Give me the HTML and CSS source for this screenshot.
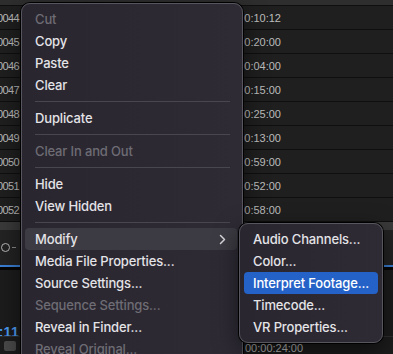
FILE: index.html
```html
<!doctype html>
<html lang="en">
<head>
  <meta charset="utf-8" />
  <meta name="viewport" content="width=device-width,initial-scale=1" />
  <title>Project panel context menu</title>
  <link rel="stylesheet" href="styles.css">
</head>
<body>

  <div class="screen">
    <div class="topbar"></div>

    <div class="rows">
      <div class="row"><span class="id">00044</span><span class="dur">00:00:10:12</span></div>
      <div class="row"><span class="id">00045</span><span class="dur">00:00:20:00</span></div>
      <div class="row"><span class="id">00046</span><span class="dur">00:00:04:00</span></div>
      <div class="row"><span class="id">00047</span><span class="dur">00:00:15:00</span></div>
      <div class="row"><span class="id">00048</span><span class="dur">00:00:25:00</span></div>
      <div class="row"><span class="id">00049</span><span class="dur">00:00:13:00</span></div>
      <div class="row"><span class="id">00050</span><span class="dur">00:00:59:00</span></div>
      <div class="row"><span class="id">00051</span><span class="dur">00:00:52:00</span></div>
      <div class="row"><span class="id">00052</span><span class="dur">00:00:58:00</span></div>
    </div>

    <div class="scrollbar"></div>

    <div class="controls">
      <span class="knob"></span><span class="dash"></span>
    </div>

    <div class="playhead"></div>

    <div class="timeline">
      <div class="tc-row"><span class="tc">00:00:11</span></div>
      <div class="tc-foot">
        <span class="mini-btn"></span>
        <span class="foot-tc">00:00:24:00</span>
      </div>
    </div>
  </div>

  <!-- main context menu -->
  <div class="menu main-menu">
    <div class="item disabled">Cut</div>
    <div class="item">Copy</div>
    <div class="item">Paste</div>
    <div class="item">Clear</div>
    <div class="sep"></div>
    <div class="item">Duplicate</div>
    <div class="sep"></div>
    <div class="item disabled">Clear In and Out</div>
    <div class="sep"></div>
    <div class="item">Hide</div>
    <div class="item">View Hidden</div>
    <div class="sep"></div>
    <div class="item open">Modify
      <svg class="chev" width="7" height="11" viewBox="0 0 7 11"><polyline points="1.5,1.5 5.5,5.5 1.5,9.5" fill="none" stroke="#d8d7dc" stroke-width="1.5" stroke-linecap="round" stroke-linejoin="round"/></svg>
    </div>
    <div class="item">Media File Properties...</div>
    <div class="item">Source Settings...</div>
    <div class="item disabled">Sequence Settings...</div>
    <div class="item">Reveal in Finder...</div>
    <div class="item disabled">Reveal Original...</div>
  </div>

  <!-- Modify submenu -->
  <div class="menu sub-menu">
    <div class="item">Audio Channels...</div>
    <div class="item">Color...</div>
    <div class="item active">Interpret Footage...</div>
    <div class="item">Timecode...</div>
    <div class="item">VR Properties...</div>
  </div>

</body>
</html>
```

FILE: styles.css
```css
:root{
  --row:#1f1f1f;
  --line:#0f0f0f;
  --text:#e4e3e7;
  --muted:#6e6c74;
  --blue:#2562c8;
}
html, body{
  margin:0;
  height:100%;
  overflow:hidden;
  background:#1b1b1b;
}
body{
  position:relative;
  font-family: "Liberation Sans", Arial, sans-serif;
}

.screen{
  display:flex;
  flex-direction:column;
  height:354px;
  overflow:hidden;
}

.topbar{
  height:6px;
  background:#2e2e2e;
  border-bottom:1px solid var(--line);
}

.row{
  display:grid;
  grid-template-columns: 20px 261px 1fr;
  height:23px;
  background:var(--row);
  border-bottom:1px solid var(--line);
  align-items:center;
  font-size:11px;
  color:#bdbdbd;
}
.row .id{
  display:flex;
  justify-content:flex-end;
  overflow:hidden;
  white-space:nowrap;
  letter-spacing:-0.6px;
  padding-right:1px;
}
.row .dur{ text-align:right; white-space:nowrap; }

.scrollbar{
  height:9px;
  background:#3a3a3a;
}

.controls{
  height:40px;
  background:#232323;
  display:flex;
  align-items:center;
  padding-left:1px;
  gap:2px;
}
.knob{
  width:7px;
  height:7px;
  border:1.5px solid #b9b9b9;
  border-radius:50%;
}
.dash{
  width:4px;
  height:1px;
  background:#8a8a8a;
}

.playhead{
  height:2px;
  background:#3a7fd5;
  border-bottom:3px solid #050505;
}

.timeline{
  flex:1;
  display:flex;
  flex-direction:column;
  background:#1c1c1c;
}
.tc-row{
  height:66px;
  width:19px;
  display:flex;
  align-items:flex-end;
  justify-content:flex-end;
  overflow:hidden;
  box-sizing:border-box;
}
.tc{
  font-size:14px;
  font-weight:700;
  color:#4d9bf2;
  white-space:nowrap;
  letter-spacing:0.3px;
  margin-bottom:-4px;
}
.tc-foot{
  flex:1;
  display:flex;
  align-items:flex-start;
  border-top:1px solid #2e2e2e;
  gap:229px;
}
.mini-btn{
  width:12px;
  height:10px;
  margin:4px 0 0 4px;
  background:#4a4a4a;
  border-radius:2px;
}
.foot-tc{
  font-size:11px;
  color:#bdbdbd;
  margin-top:5px;
}

/* context menus */
.menu{
  position:absolute;
  box-sizing:border-box;
  background:linear-gradient(90deg, #29262f, #2e2b35);
  border:1px solid #57555d;
  border-radius:9px;
  box-shadow:0 0 0 1px #000, 0 8px 24px rgba(0,0,0,0.55);
  font-family: Inter, "Noto Sans", sans-serif;
  font-size:13px;
  font-weight:500;
  letter-spacing:-0.15px;
  color:var(--text);
}
.main-menu{
  left:21px;
  top:3px;
  bottom:-30px;
  width:222px;
  padding:4px 5px 4px 3px;
  overflow:hidden;
}
.sub-menu{
  left:239px;
  top:223px;
  width:144px;
  padding:4px 4px;
}

.item{
  display:flex;
  align-items:center;
  justify-content:space-between;
  height:22px;
  padding:0 11px 0 10px;
  border-radius:4px;
  white-space:nowrap;
}
.sub-menu .item{ padding-left:9px; }
.item.disabled{ color:var(--muted); }
.item.open{ background:#3c3a42; }
.item.active{ background:var(--blue); color:#fff; }

.sep{
  height:1px;
  margin:5px 7px 5px 10px;
  background:#48464e;
}
```
